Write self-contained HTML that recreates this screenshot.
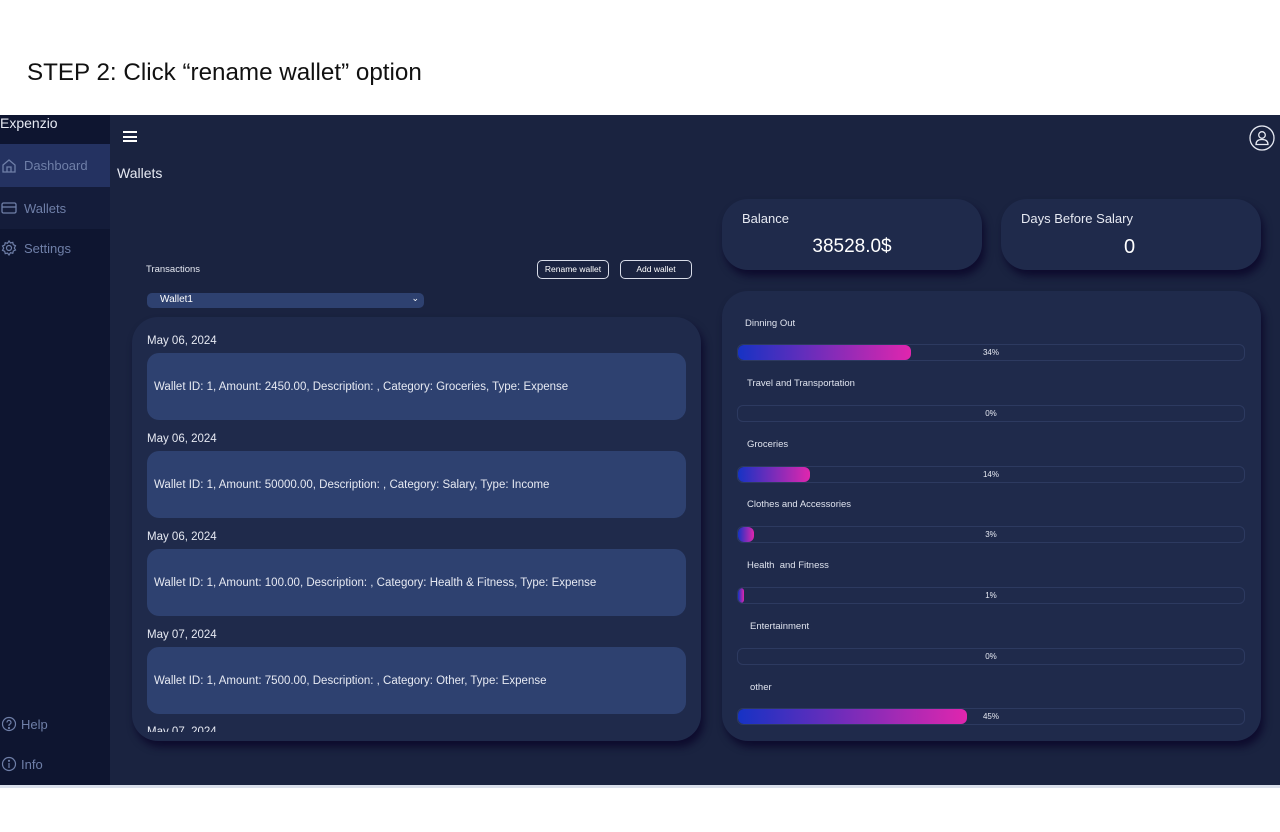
<!DOCTYPE html>
<html><head><style>
*{margin:0;padding:0;box-sizing:border-box}
body{width:1280px;height:832px;background:#fff;font-family:"Liberation Sans",sans-serif;position:relative;overflow:hidden}
.abs{position:absolute}
.step{left:27px;top:59px;font-size:24.2px;color:#111}
.app{left:0;top:115px;width:1280px;height:670px;background:#1a2340}
.line{left:0;top:785px;width:1280px;height:3px;background:#d9dfeb}
.side{left:0;top:0;width:110px;height:670px;background:#0e1530}
.side .it{position:absolute;left:0;width:110px;height:42px;color:#6f7fa8;font-size:13px;display:flex;align-items:center;gap:7px;padding-left:1px}
.card{background:#1f2a4b;border-radius:26px;box-shadow:3px 6px 8px rgba(10,5,40,.8)}
.tx{position:absolute;left:15px;width:539px;height:67px;background:#2e4170;border-radius:12px;color:#e6e9f2;font-size:11.5px;padding:28px 0 0 7px}
.dt{position:absolute;left:15px;color:#e6e9f2;font-size:11.5px}
.lbl{position:absolute;color:#dfe3ee;font-size:9.5px}
.bar{position:absolute;left:15px;width:508px;height:17px;border:1px solid #2d3a60;border-radius:6px;overflow:hidden}
.bar i{position:absolute;left:0;top:0;bottom:0;background:linear-gradient(90deg,#1632c4,#e026ae);border-radius:6px}
.bar span{position:absolute;left:0;right:0;top:3px;text-align:center;color:#e6e9f2;font-size:8px}
.btn{position:absolute;top:145px;height:19px;border:1px solid #d8dce8;border-radius:5px;color:#fff;font-size:8.5px;text-align:center;line-height:17px}
</style></head><body>
<div class="abs step">STEP 2: Click “rename wallet” option</div>
<div class="abs app">
 <div class="abs side">
  <div class="abs" style="left:0;top:0;color:#e6e9f2;font-size:14px">Expenzio</div>
  <div class="it" style="top:29px;height:43px;background:#243261"><svg width="16" height="16" viewBox="0 0 16 16" fill="none" stroke="#6f7fa8" stroke-width="1.3"><path d="M2 7L8 2l6 5v7H2z"/><path d="M6 14V9h4v5"/></svg>Dashboard</div>
  <div class="it" style="top:72px;background:#141c3a"><svg width="16" height="14" viewBox="0 0 16 14" fill="none" stroke="#6f7fa8" stroke-width="1.3"><rect x="1" y="2" width="14" height="10" rx="1.5"/><path d="M1 6h14"/></svg>Wallets</div>
  <div class="it" style="top:112px"><svg width="16" height="16" viewBox="0 0 16 16" fill="none" stroke="#6f7fa8" stroke-width="1.2"><circle cx="8" cy="8" r="2.5"/><path d="M8 1l1.5 2 2.3-.6.5 2.3 2.2 1L13.3 8l1.2 2-2.2 1-.5 2.3-2.3-.6L8 15l-1.5-2-2.3.6-.5-2.3-2.2-1L2.7 8 1.5 6l2.2-1 .5-2.3 2.3.6z"/></svg>Settings</div>
  <div class="it" style="top:588px;gap:4px"><svg width="16" height="16" viewBox="0 0 16 16" fill="none" stroke="#6f7fa8" stroke-width="1.2"><circle cx="8" cy="8" r="6.5"/><path d="M6 6.5a2 2 0 1 1 2.5 1.8c-.4.2-.5.5-.5 1V10"/><circle cx="8" cy="12" r=".5"/></svg>Help</div>
  <div class="it" style="top:628px;gap:4px"><svg width="16" height="16" viewBox="0 0 16 16" fill="none" stroke="#6f7fa8" stroke-width="1.2"><circle cx="8" cy="8" r="6.5"/><path d="M8 7v5"/><circle cx="8" cy="4.8" r=".5"/></svg>Info</div>
 </div>
 <div class="abs" style="left:123px;top:16px;width:14px;height:11px;border-top:2px solid #fff;border-bottom:2px solid #fff"><div style="margin-top:2.5px;height:2px;background:#fff"></div></div>
 <svg class="abs" style="left:1249px;top:10px" width="26" height="26" viewBox="0 0 26 26" fill="none" stroke="#e6e9f2" stroke-width="1.3"><circle cx="13" cy="13" r="12"/><circle cx="13" cy="10" r="3.3"/><path d="M7 19.5c0-3.5 2.5-5 6-5s6 1.5 6 5z"/></svg>
 <div class="abs" style="left:117px;top:50px;color:#e6e9f2;font-size:14px">Wallets</div>
 <div class="abs" style="left:146px;top:149px;color:#e6e9f2;font-size:9.5px">Transactions</div>
 <div class="btn" style="left:537px;width:72px">Rename wallet</div>
 <div class="btn" style="left:620px;width:72px">Add wallet</div>
 <div class="abs" style="left:147px;top:178px;width:277px;height:15px;background:#2e4170;border-radius:5px;color:#fff;font-size:10px;padding:1px 0 0 13px">Wallet1<span style="position:absolute;right:5px;top:0;font-size:9px">⌄</span></div>
 <div class="abs card" style="left:132px;top:202px;width:569px;height:424px">
  <div class="abs" style="left:0;top:0;width:569px;height:415px;overflow:hidden">
  <div class="dt" style="top:18px">May 06, 2024</div>
  <div class="tx" style="top:36px">Wallet ID: 1, Amount: 2450.00, Description: , Category: Groceries, Type: Expense</div>
  <div class="dt" style="top:116px">May 06, 2024</div>
  <div class="tx" style="top:134px">Wallet ID: 1, Amount: 50000.00, Description: , Category: Salary, Type: Income</div>
  <div class="dt" style="top:214px">May 06, 2024</div>
  <div class="tx" style="top:232px">Wallet ID: 1, Amount: 100.00, Description: , Category: Health &amp; Fitness, Type: Expense</div>
  <div class="dt" style="top:312px">May 07, 2024</div>
  <div class="tx" style="top:330px">Wallet ID: 1, Amount: 7500.00, Description: , Category: Other, Type: Expense</div>
  <div class="dt" style="top:409px">May 07, 2024</div>
  </div>
 </div>
 <div class="abs card" style="left:722px;top:84px;width:260px;height:71px">
  <div class="abs" style="left:20px;top:12px;color:#e6e9f2;font-size:13px">Balance</div>
  <div class="abs" style="left:0;width:260px;text-align:center;top:37px;color:#fff;font-size:19px">38528.0$</div>
 </div>
 <div class="abs card" style="left:1001px;top:84px;width:260px;height:71px">
  <div class="abs" style="left:20px;top:12px;color:#e6e9f2;font-size:13px">Days Before Salary</div>
  <div class="abs" style="left:123px;top:37px;color:#fff;font-size:20px">0</div>
 </div>
 <div class="abs card" style="left:722px;top:176px;width:539px;height:450px">
  <div class="lbl" style="left:23px;top:27px">Dinning Out</div>
  <div class="bar" style="top:53px"><i style="width:173px"></i><span>34%</span></div>
  <div class="lbl" style="left:25px;top:87px">Travel and Transportation</div>
  <div class="bar" style="top:114px"><span>0%</span></div>
  <div class="lbl" style="left:25px;top:148px">Groceries</div>
  <div class="bar" style="top:175px"><i style="width:72px"></i><span>14%</span></div>
  <div class="lbl" style="left:25px;top:208px">Clothes and Accessories</div>
  <div class="bar" style="top:235px"><i style="width:16px"></i><span>3%</span></div>
  <div class="lbl" style="left:25px;top:269px">Health &nbsp;and Fitness</div>
  <div class="bar" style="top:296px"><i style="width:6px"></i><span>1%</span></div>
  <div class="lbl" style="left:28px;top:330px">Entertainment</div>
  <div class="bar" style="top:357px"><span>0%</span></div>
  <div class="lbl" style="left:28px;top:391px">other</div>
  <div class="bar" style="top:417px"><i style="width:229px"></i><span>45%</span></div>
 </div>
</div>
<div class="abs line"></div>
</body></html>
